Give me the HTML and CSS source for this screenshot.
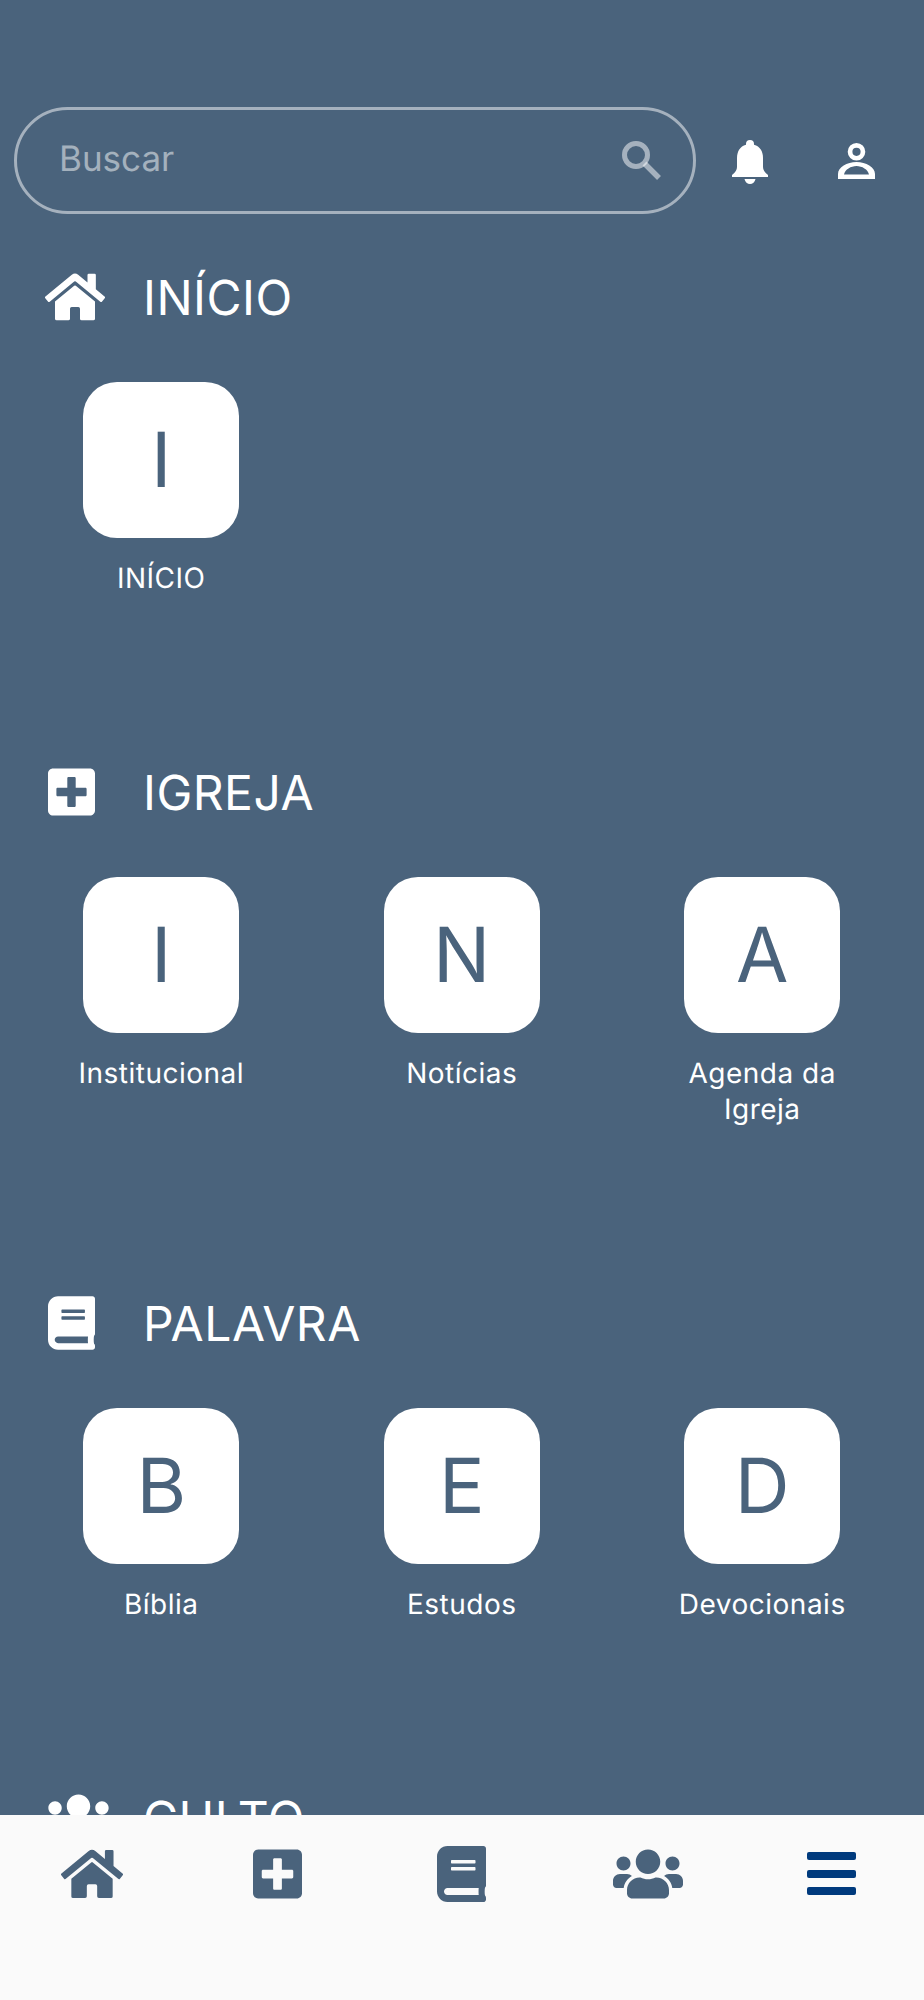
FILE: index.html
```html
<!DOCTYPE html>
<html lang="pt-BR">
<head>
<meta charset="utf-8">
<title>Menu</title>
<link rel="stylesheet" href="styles.css">
</head>
<body>
<div class="app">
  <main class="content">
    <header class="topbar">
      <div class="search">
        <span class="search-text">Buscar</span>
        <svg class="search-icon" viewBox="0 0 39 39"><circle cx="14" cy="14" r="11.5" fill="none" stroke="currentColor" stroke-width="5"/><path d="M22.5 22.5L37 37" fill="none" stroke="currentColor" stroke-width="5.5"/></svg>
      </div>
      <div class="top-action">
        <svg class="bell-icon" viewBox="0 0 36 44"><path fill="currentColor" d="M18 0a4 4 0 0 1 4 4v.8C28 6.5 31 11.5 31 18v9c0 3 1.5 5 5 8v2H0v-2c3.500-3 5-5 5-8v-9C5 11.500 8 6.500 14 4.800V4a4 4 0 0 1 4-4zM12.500 39h11c-.5 3-3 5-5.500 5s-5-2-5.500-5z"/></svg>
      </div>
      <div class="top-action">
        <svg class="person-icon" viewBox="0 0 37 36"><path fill="currentColor" fill-rule="evenodd" d="M18.500 0a8.800 8.800 0 1 1 0 17.600a8.800 8.800 0 0 1 0-17.600zm0 4.700a4.100 4.100 0 1 0 0 8.200a4.100 4.100 0 0 0 0-8.200zM0 36v-5C0 24 9 19 18.500 19S37 24 37 31v5zM6 31.500h25c-1-5-7-8.500-12.500-8.500S7 26.500 6 31.500z"/></svg>
      </div>
    </header>

    <section class="section">
      <h2 class="section-title">
        <span class="section-icon">
          <svg class="glyph glyph-home" viewBox="0 0 576 512"><path fill="currentColor" d="M280.37 148.26L96 300.11V464a16 16 0 0 0 16 16l112.06-.29a16 16 0 0 0 15.92-16V368a16 16 0 0 1 16-16h64a16 16 0 0 1 16 16v95.64a16 16 0 0 0 16 16.05L464 480a16 16 0 0 0 16-16V300L295.67 148.26a12.19 12.19 0 0 0-15.3 0zM571.6 251.47L488 182.56V44.05a12 12 0 0 0-12-12h-56a12 12 0 0 0-12 12v72.61L318.47 43a48 48 0 0 0-61 0L4.34 251.47a12 12 0 0 0-1.6 16.9l25.5 31A12 12 0 0 0 45.15 301l235.22-193.74a12.19 12.19 0 0 1 15.3 0L530.9 301a12 12 0 0 0 16.9-1.6l25.5-31a12 12 0 0 0-1.7-16.93z"/></svg>
        </span>
        INÍCIO
      </h2>
      <div class="tiles">
        <a class="tile"><span class="tile-box">I</span><span class="tile-label">INÍCIO</span></a>
      </div>
    </section>

    <section class="section">
      <h2 class="section-title">
        <span class="section-icon">
          <svg class="glyph glyph-narrow" viewBox="0 0 448 512"><path fill="currentColor" d="M400 32H48C21.500 32 0 53.500 0 80v352c0 26.500 21.500 48 48 48h352c26.500 0 48-21.500 48-48V80c0-26.500-21.500-48-48-48zm-32 252c0 6.600-5.400 12-12 12h-92v92c0 6.600-5.400 12-12 12h-56c-6.600 0-12-5.400-12-12v-92H92c-6.600 0-12-5.400-12-12v-56c0-6.600 5.400-12 12-12h92v-92c0-6.600 5.400-12 12-12h56c6.600 0 12 5.400 12 12v92h92c6.600 0 12 5.400 12 12v56z"/></svg>
        </span>
        IGREJA
      </h2>
      <div class="tiles">
        <a class="tile"><span class="tile-box">I</span><span class="tile-label">Institucional</span></a>
        <a class="tile"><span class="tile-box">N</span><span class="tile-label">Notícias</span></a>
        <a class="tile"><span class="tile-box">A</span><span class="tile-label">Agenda da Igreja</span></a>
      </div>
    </section>

    <section class="section">
      <h2 class="section-title">
        <span class="section-icon">
          <svg class="glyph glyph-narrow" viewBox="0 0 448 512"><path fill="currentColor" d="M448 360V24c0-13.300-10.700-24-24-24H96C43 0 0 43 0 96v320c0 53 43 96 96 96h328c13.300 0 24-10.700 24-24v-16c0-7.500-3.500-14.300-8.900-18.700-4.200-15.400-4.200-59.300 0-74.700 5.400-4.300 8.900-11.100 8.900-18.600zM128 134c0-3.300 2.700-6 6-6h212c3.300 0 6 2.700 6 6v20c0 3.300-2.700 6-6 6H134c-3.300 0-6-2.700-6-6v-20zm0 64c0-3.300 2.700-6 6-6h212c3.300 0 6 2.700 6 6v20c0 3.300-2.700 6-6 6H134c-3.300 0-6-2.700-6-6v-20zm253.400 250H96c-17.700 0-32-14.300-32-32 0-17.600 14.400-32 32-32h285.400c-1.900 17.100-1.900 46.900 0 64z"/></svg>
        </span>
        PALAVRA
      </h2>
      <div class="tiles">
        <a class="tile"><span class="tile-box">B</span><span class="tile-label">Bíblia</span></a>
        <a class="tile"><span class="tile-box">E</span><span class="tile-label">Estudos</span></a>
        <a class="tile"><span class="tile-box">D</span><span class="tile-label">Devocionais</span></a>
      </div>
    </section>

    <section class="section">
      <h2 class="section-title">
        <span class="section-icon">
          <svg class="glyph glyph-users" viewBox="0 0 640 512"><path fill="currentColor" d="M96 224c35.300 0 64-28.700 64-64s-28.700-64-64-64-64 28.700-64 64 28.700 64 64 64zm448 0c35.300 0 64-28.700 64-64s-28.700-64-64-64-64 28.700-64 64 28.700 64 64 64zm32 32h-64c-17.600 0-33.500 7.100-45.100 18.600 40.300 22.100 68.900 62 75.100 109.400h66c17.700 0 32-14.300 32-32v-32c0-35.300-28.700-64-64-64zm-256 0c61.900 0 112-50.100 112-112S381.900 32 320 32 208 82.100 208 144s50.100 112 112 112zm76.800 32h-8.300c-20.800 10-43.900 16-68.500 16s-47.600-6-68.500-16h-8.300C179.600 288 128 339.600 128 403.200V432c0 26.500 21.500 48 48 48h288c26.500 0 48-21.500 48-48v-28.800c0-63.600-51.600-115.200-115.200-115.200zm-223.700-13.400C161.500 263.100 145.600 256 128 256H64c-35.300 0-64 28.700-64 64v32c0 17.700 14.300 32 32 32h65.900c6.300-47.400 34.900-87.300 75.200-109.400z"/></svg>
        </span>
        CULTO
      </h2>
    </section>
  </main>

  <nav class="tabbar">
    <a class="tab"><svg class="tab-icon tab-home" viewBox="0 0 576 512"><path fill="currentColor" d="M280.37 148.26L96 300.11V464a16 16 0 0 0 16 16l112.06-.29a16 16 0 0 0 15.92-16V368a16 16 0 0 1 16-16h64a16 16 0 0 1 16 16v95.64a16 16 0 0 0 16 16.05L464 480a16 16 0 0 0 16-16V300L295.67 148.26a12.19 12.19 0 0 0-15.3 0zM571.6 251.47L488 182.56V44.05a12 12 0 0 0-12-12h-56a12 12 0 0 0-12 12v72.61L318.47 43a48 48 0 0 0-61 0L4.34 251.47a12 12 0 0 0-1.6 16.9l25.5 31A12 12 0 0 0 45.15 301l235.22-193.74a12.19 12.19 0 0 1 15.3 0L530.9 301a12 12 0 0 0 16.9-1.6l25.5-31a12 12 0 0 0-1.7-16.93z"/></svg></a>
    <a class="tab"><svg class="tab-icon tab-narrow" viewBox="0 0 448 512"><path fill="currentColor" d="M400 32H48C21.500 32 0 53.500 0 80v352c0 26.500 21.500 48 48 48h352c26.500 0 48-21.500 48-48V80c0-26.500-21.500-48-48-48zm-32 252c0 6.600-5.400 12-12 12h-92v92c0 6.600-5.400 12-12 12h-56c-6.600 0-12-5.400-12-12v-92H92c-6.600 0-12-5.400-12-12v-56c0-6.600 5.400-12 12-12h92v-92c0-6.600 5.400-12 12-12h56c6.600 0 12 5.400 12 12v92h92c6.600 0 12 5.400 12 12v56z"/></svg></a>
    <a class="tab"><svg class="tab-icon tab-narrow" viewBox="0 0 448 512"><path fill="currentColor" d="M448 360V24c0-13.300-10.700-24-24-24H96C43 0 0 43 0 96v320c0 53 43 96 96 96h328c13.300 0 24-10.700 24-24v-16c0-7.500-3.500-14.300-8.900-18.700-4.200-15.400-4.200-59.300 0-74.700 5.400-4.300 8.900-11.100 8.900-18.600zM128 134c0-3.300 2.700-6 6-6h212c3.300 0 6 2.700 6 6v20c0 3.300-2.700 6-6 6H134c-3.300 0-6-2.700-6-6v-20zm0 64c0-3.300 2.700-6 6-6h212c3.300 0 6 2.700 6 6v20c0 3.300-2.700 6-6 6H134c-3.300 0-6-2.700-6-6v-20zm253.400 250H96c-17.700 0-32-14.300-32-32 0-17.600 14.400-32 32-32h285.400c-1.900 17.100-1.900 46.900 0 64z"/></svg></a>
    <a class="tab"><svg class="tab-icon tab-users" viewBox="0 0 640 512"><path fill="currentColor" d="M96 224c35.300 0 64-28.700 64-64s-28.700-64-64-64-64 28.700-64 64 28.700 64 64 64zm448 0c35.300 0 64-28.700 64-64s-28.700-64-64-64-64 28.700-64 64 28.700 64 64 64zm32 32h-64c-17.600 0-33.500 7.100-45.100 18.600 40.300 22.100 68.900 62 75.100 109.400h66c17.700 0 32-14.300 32-32v-32c0-35.300-28.700-64-64-64zm-256 0c61.900 0 112-50.100 112-112S381.900 32 320 32 208 82.100 208 144s50.100 112 112 112zm76.800 32h-8.300c-20.800 10-43.900 16-68.500 16s-47.600-6-68.500-16h-8.300C179.600 288 128 339.600 128 403.200V432c0 26.500 21.500 48 48 48h288c26.500 0 48-21.500 48-48v-28.800c0-63.600-51.600-115.200-115.200-115.200zm-223.700-13.400C161.500 263.100 145.600 256 128 256H64c-35.300 0-64 28.700-64 64v32c0 17.700 14.300 32 32 32h65.900c6.300-47.400 34.900-87.300 75.200-109.400z"/></svg></a>
    <a class="tab tab-active"><svg class="tab-icon tab-narrow" viewBox="0 0 49 56"><rect y="6" width="49" height="8" rx="2" fill="currentColor"/><rect y="24" width="49" height="8" rx="2" fill="currentColor"/><rect y="41" width="49" height="8" rx="2" fill="currentColor"/></svg></a>
  </nav>
</div>
</body>
</html>
```

FILE: styles.css
```css
* { box-sizing: border-box; }

html, body {
  margin: 0;
  height: 2000px;
  overflow: hidden;
}

body {
  font-family: Inter, "Liberation Sans", sans-serif;
  font-weight: 400;
  color: #fff;
  background: #4a637c;
  text-rendering: geometricPrecision;
}

.app {
  display: flex;
  flex-direction: column;
  height: 2000px;
}

.content {
  flex: 1;
  min-height: 0;
  overflow: hidden;
  padding-top: 107px;
}

.topbar {
  display: flex;
  align-items: center;
  padding-left: 14px;
  margin-bottom: 53px;
}

.search {
  width: 682px;
  height: 107px;
  border: 3px solid rgba(255, 255, 255, 0.5);
  border-radius: 54px;
  display: flex;
  align-items: center;
  justify-content: space-between;
  padding: 0 32px 0 43px;
  color: rgba(255, 255, 255, 0.5);
}

.search-text {
  font-size: 35px;
  margin: -4px 0 0 -1px;
}

.search-icon { width: 39px; height: 39px; }

.top-action {
  width: 107px;
  display: flex;
  justify-content: center;
}

.bell-icon { width: 36px; height: 44px; margin-top: 2px; }

.person-icon { width: 37px; height: 36px; }

.section { padding-bottom: 166px; }

.section-title {
  display: flex;
  align-items: center;
  height: 60px;
  margin: 0 0 55px;
  padding-left: 48px;
  font-size: 48px;
  font-weight: 400;
  letter-spacing: 0.5px;
}

.section-icon {
  width: 95px;
  display: flex;
  align-items: center;
}

.glyph { height: 54px; display: block; }
.glyph-home { width: 60px; margin-left: -3px; }
.glyph-narrow { width: 47px; }
.glyph-users { width: 67px; margin-left: -3px; }

.tiles {
  display: grid;
  grid-template-columns: repeat(3, 1fr);
  padding: 0 11.5px 0 11px;
}

.tile {
  display: flex;
  flex-direction: column;
  align-items: center;
}

.tile-box {
  width: 156px;
  height: 156px;
  border-radius: 34px;
  background: #fff;
  color: #4a637c;
  font-size: 76px;
  display: flex;
  align-items: center;
  justify-content: center;
}

.tile-label {
  margin-top: 22px;
  max-width: 190px;
  font-size: 28px;
  line-height: 36px;
  letter-spacing: 0.5px;
  text-align: center;
}

.tabbar {
  height: 185px;
  flex: none;
  background: #fafafa;
  display: grid;
  grid-template-columns: repeat(5, 1fr);
  padding-top: 31px;
  color: #4a637c;
}

.tab {
  display: flex;
  justify-content: center;
  align-items: flex-start;
}

.tab-active { color: #003a7d; }

.tab-icon { height: 56px; display: block; }
.tab-home { width: 62px; margin-left: -1px; }
.tab-narrow { width: 49px; }
.tab-users { width: 70px; margin-left: 2px; }
```
